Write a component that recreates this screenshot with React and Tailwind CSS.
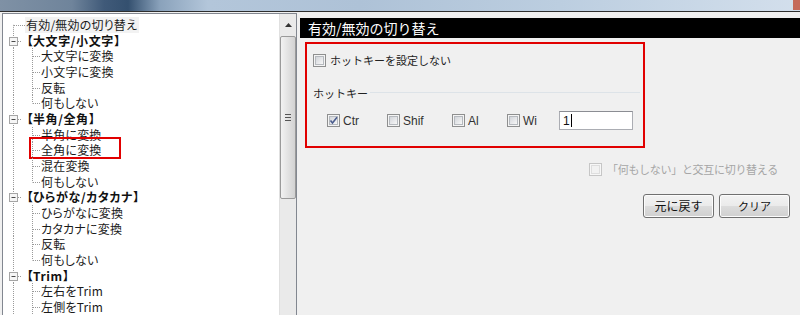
import React from "react";

const rows = [
  { t: "top", text: "有効/無効の切り替え" },
  { t: "group", text: "大文字/小文字" },
  { t: "child", text: "大文字に変換" },
  { t: "child", text: "小文字に変換" },
  { t: "child", text: "反転" },
  { t: "child", text: "何もしない", last: true },
  { t: "group", text: "半角/全角" },
  { t: "child", text: "半角に変換" },
  { t: "child", text: "全角に変換", mark: true },
  { t: "child", text: "混在変換" },
  { t: "child", text: "何もしない", last: true },
  { t: "group", text: "ひらがな/カタカナ" },
  { t: "child", text: "ひらがなに変換" },
  { t: "child", text: "カタカナに変換" },
  { t: "child", text: "反転" },
  { t: "child", text: "何もしない", last: true },
  { t: "group", text: "Trim" },
  { t: "child", text: "左右をTrim" },
  { t: "child", text: "左側をTrim" },
];

const dot = { stroke: "#9a9a9a", strokeWidth: 1, strokeDasharray: "1 1" };

function Connector({ t, last }) {
  if (t === "top") {
    return (
      <svg width="22" height="100%" className="shrink-0 h-full">
        <line x1="10.5" y1="50%" x2="10.5" y2="100%" {...dot} />
        <line x1="11" y1="8.5" x2="22" y2="8.5" {...dot} />
      </svg>
    );
  }
  if (t === "group") {
    return (
      <svg width="18" height="100%" className="shrink-0 h-full">
        <line x1="10.5" y1="0" x2="10.5" y2="100%" {...dot} />
        <rect x="6.5" y="4.5" width="8" height="8" fill="#f6f6f6" stroke="#a5a5a5" />
        <line x1="8.5" y1="8.5" x2="12.5" y2="8.5" stroke="#4a4a4a" strokeWidth="1" />
        <line x1="15" y1="8.5" x2="18" y2="8.5" {...dot} />
      </svg>
    );
  }
  return (
    <svg width="38" height="100%" className="shrink-0 h-full">
      <line x1="10.5" y1="0" x2="10.5" y2="100%" {...dot} />
      <line x1="29.5" y1="0" x2="29.5" y2={last ? "8.5" : "100%"} {...dot} />
      <line x1="30" y1="8.5" x2="38" y2="8.5" {...dot} />
    </svg>
  );
}

function TreeRow({ r }) {
  return (
    <div className="relative flex items-stretch h-[15.67px]">
      <Connector t={r.t} last={r.last} />
      {r.t === "group" ? (
        <span className="leading-[15.67px] whitespace-nowrap text-[12px] text-[#111] font-bold">
          【<span className="[font-feature-settings:'palt'] tracking-[0.6px]">{r.text}</span>】
        </span>
      ) : (
        <span
          className={
            "leading-[15.67px] whitespace-nowrap text-[12px] text-[#1a1a1a] [font-feature-settings:'palt'] tracking-[0.2px]" +
            (r.t === "top" ? " bg-[#f2f2f2] pl-[1px] pr-[2px]" : "")
          }
        >
          {r.text}
        </span>
      )}
      {r.mark && (
        <div className="absolute left-[26px] top-[-5px] w-[92px] h-[22px] border-2 border-[#e10000]" />
      )}
    </div>
  );
}

function Checkbox({ checked, disabled }) {
  return (
    <div
      className={
        "w-[13px] h-[13px] shrink-0 border flex items-center justify-center " +
        (disabled ? "border-[#c6c6c6] bg-[#f7f7f7]" : "border-[#8e8f8f] bg-[#f4f4f4]")
      }
    >
      <div
        className={
          "w-[9px] h-[9px] border " +
          (disabled
            ? "border-[#dedede] bg-[#f2f2f2]"
            : "border-[#b5b9be] bg-[linear-gradient(135deg,#d2d5da,#f7f7f7)]")
        }
      >
        {checked && (
          <svg width="9" height="9" viewBox="0 0 9 9" className="block -mt-[1px] -ml-[1px]">
            <path d="M1.5 4.5 L3.5 7 L8 1.2" fill="none" stroke="#4b5d8e" strokeWidth="1.6" />
          </svg>
        )}
      </div>
    </div>
  );
}

function Btn({ children, cls }) {
  return (
    <div
      className={
        "w-[71px] h-[24px] rounded-[3px] border border-[#707070] flex items-center justify-center text-[#111] bg-[linear-gradient(180deg,#f3f3f3_0%,#ebebeb_48%,#dcdcdc_52%,#d0d0d0_100%)] shadow-[inset_0_0_0_1px_#fcfcfc] " +
        cls
      }
    >
      {children}
    </div>
  );
}

export default function App() {
  return (
    <div className="w-[800px] h-[315px] overflow-hidden bg-[#f0f0f0] font-['Noto_Sans_CJK_JP','Noto_Sans',sans-serif] flex flex-col">
      {/* blurred top strip */}
      <div className="relative h-[11px] shrink-0 bg-[linear-gradient(90deg,#7f91a5_0%,#6f849b_9%,#405a79_13%,#34506f_16%,#8aa2bb_20%,#b3c6da_26%,#aec2d7_45%,#bccee0_70%,#d3dfec_100%)]">
        <div className="absolute right-0 top-0 w-[7px] h-[10px] bg-[#c56a5a]" />
      </div>
      <div className="h-[1px] shrink-0 bg-[#2e2e2e]" />
      <div className="flex flex-1 pt-[1px] min-h-0">
        {/* left tree panel */}
        <div className="ml-[2px] w-[295px] shrink-0 bg-white border-t border-l border-r border-[#828790] flex">
          <div className="flex-1 pt-[3px] overflow-hidden">
            {rows.map((r, i) => (
              <TreeRow key={i} r={r} />
            ))}
          </div>
          {/* scrollbar */}
          <div className="w-[17px] shrink-0 bg-[#eaeaea] border-l border-[#e0e0e0] flex flex-col items-center">
            <div className="h-[22px] w-full flex items-center justify-center">
              <svg width="7" height="4" viewBox="0 0 7 4">
                <path d="M0 4 L3.5 0 L7 4 Z" fill="#333" />
              </svg>
            </div>
            <div className="w-[16px] h-[163px] rounded-[2px] border border-[#9a9a9a] bg-[linear-gradient(90deg,#f2f2f2,#e2e2e2_50%,#d2d2d2)] flex items-center justify-center">
              <div className="flex flex-col gap-[2px]">
                <div className="w-[6px] h-[1px] bg-[#555]" />
                <div className="w-[6px] h-[1px] bg-[#555]" />
                <div className="w-[6px] h-[1px] bg-[#555]" />
              </div>
            </div>
          </div>
        </div>

        {/* right panel */}
        <div className="ml-[3px] flex-1 flex flex-col pt-[5px]">
          <div className="h-[20px] bg-black text-white text-[14px] leading-[20px] pl-[8px]">
            有効/無効の切り替え
          </div>
          <div className="ml-[5px] mt-[4px] w-[340px] h-[106px] border-2 border-[#e10000] flex flex-col">
            <div className="mt-[10px] ml-[6px] flex items-center gap-[4px] h-[13px]">
              <Checkbox />
              <span className="text-[11px] text-[#222] leading-[13px]">ホットキーを設定しない</span>
            </div>
            <div className="mt-[19px] ml-[6px] mr-[3px] flex items-center h-[14px]">
              <span className="text-[11px] text-[#222] leading-[14px]">ホットキー</span>
              <div className="flex-1 ml-[2px] h-[2px] border-t border-[#dde3e8]" />
            </div>
            <div className="mt-[11px] ml-[20px] flex items-center h-[19px] font-['Liberation_Sans',Arial,sans-serif] text-[12px] text-[#333]">
              <div className="w-[60px] flex items-center gap-[3px]">
                <Checkbox checked />
                <span>Ctr</span>
              </div>
              <div className="w-[65px] flex items-center gap-[3px]">
                <Checkbox />
                <span>Shif</span>
              </div>
              <div className="w-[55px] flex items-center gap-[3px]">
                <Checkbox />
                <span>Al</span>
              </div>
              <div className="w-[52px] flex items-center gap-[3px]">
                <Checkbox />
                <span>Wi</span>
              </div>
              <div className="w-[74px] h-[19px] bg-white border border-[#abadb3] border-t-[#8b8d93] flex items-center pl-[3px] text-[#111]">
                <span>1</span>
                <div className="w-[1px] h-[13px] bg-black ml-[1px]" />
              </div>
            </div>
          </div>
          <div className="mt-[15px] ml-[289px] flex items-center gap-[5px] h-[13px]">
            <Checkbox disabled />
            <span className="text-[11px] text-[#a6a6a6] leading-[13px] whitespace-nowrap tracking-[-0.3px]">
              「何もしない」と交互に切り替える
            </span>
          </div>
          <div className="mt-[18px] ml-[343px] flex gap-[5px]">
            <Btn cls="text-[12px]">元に戻す</Btn>
            <Btn cls="text-[11px]">クリア</Btn>
          </div>
        </div>
      </div>
    </div>
  );
}
